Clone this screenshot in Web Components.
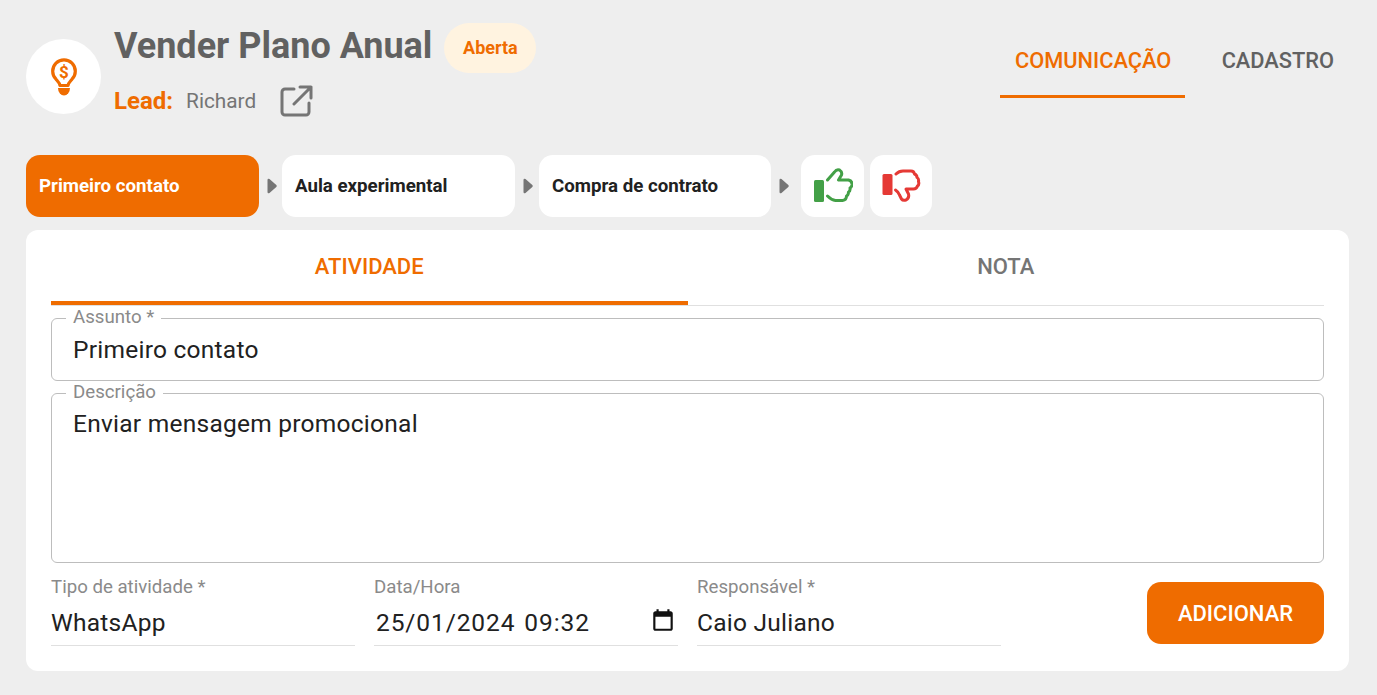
<!DOCTYPE html>
<html lang="pt"><head><meta charset="utf-8"><title>Vender Plano Anual</title>
<style>
html,body{margin:0;background:#eee;font-family:Roboto,sans-serif}
</style></head><body>
<crm-page></crm-page>
<template id="t-page">
<style>
:host{display:block;box-sizing:border-box;height:695px;padding:0 28px 0 26px;overflow:hidden;background:#eee}
header{display:flex;justify-content:space-between;height:155px}
.card{background:#fff;border-radius:12px;margin-top:13px;height:441px;box-sizing:border-box;padding:0 25px;display:flex;flex-direction:column}
.fields{display:flex;flex-direction:column;gap:12px;margin-top:12px}
.row{display:flex;gap:19px;margin-top:12px;align-items:flex-start}
.row crm-line-field{flex:0 0 304px}
.row crm-button{margin-left:auto;margin-top:7px}
</style>
<header><crm-heading></crm-heading><crm-tabs class="top"></crm-tabs></header>
<crm-steps></crm-steps>
<section class="card">
  <crm-inner-tabs></crm-inner-tabs>
  <div class="fields">
    <crm-outline-field label="Assunto *" value="Primeiro contato" h="63"></crm-outline-field>
    <crm-outline-field label="Descrição" value="Enviar mensagem promocional" h="170" area></crm-outline-field>
  </div>
  <div class="row">
    <crm-line-field label="Tipo de atividade *" value="WhatsApp"></crm-line-field>
    <crm-line-field label="Data/Hora" value="25/01/2024 09:32" date></crm-line-field>
    <crm-line-field label="Responsável *" value="Caio Juliano"></crm-line-field>
    <crm-button>ADICIONAR</crm-button>
  </div>
</section>
</template>

<template id="t-heading">
<style>
:host{display:flex;align-items:flex-start}
.logo{width:75px;height:75px;border-radius:50%;background:#fff;margin-top:39px;display:flex;align-items:center;justify-content:center;flex:none}
.txt{margin-left:13px;padding-top:23px}
.title{display:flex;align-items:center;height:50px}
h1{margin:0;font:700 36px/46px Roboto,sans-serif;color:#616161;height:50px}
.chip{margin-left:12px;width:92px;height:50px;border-radius:25px;background:#fff3e0;color:#ef6c00;font:700 18px/50px Roboto,sans-serif;text-align:center}
.lead{display:flex;align-items:center;height:32px;margin-top:12px}
b{font:700 24px/36px Roboto,sans-serif;color:#ef6c00}
span.n{font:400 20.800px/36px Roboto,sans-serif;color:#757575;margin-left:13px}
svg.ext{margin-left:23px}
</style>
<div class="logo">
<svg width="26" height="38" viewBox="0 0 26 38"><path d="M9 27.500c-.3-2.500-2.200-4.200-4-6.300A11.300 11.300 0 1 1 21 21.200c-1.800 2.100-3.700 3.800-4 6.300z" fill="none" stroke="#ef6c00" stroke-width="3.200" stroke-linejoin="round"/><path d="M7 30h12a6 7.500 0 0 1-12 0z" fill="#ef6c00"/><text x="13" y="19.500" text-anchor="middle" font-family="Roboto" font-weight="700" font-size="17" fill="#ef6c00">$</text></svg>
</div>
<div class="txt">
  <div class="title"><h1>Vender Plano Anual</h1><span class="chip">Aberta</span></div>
  <div class="lead"><b>Lead:</b><span class="n">Richard</span>
  <svg class="ext" width="34" height="34" viewBox="0 0 34 34" fill="none" stroke="#757575" stroke-width="3" stroke-linecap="round" stroke-linejoin="round"><path d="M15 5H6a3 3 0 0 0-3 3v20a3 3 0 0 0 3 3h21a3 3 0 0 0 3-3v-9"/><path d="M21 3h11v11M32 3 15 20"/></svg></div>
</div>
</template>

<template id="t-tabs">
<style>
:host{display:flex;padding-top:25px;height:73px}
div{height:73px;box-sizing:border-box;font:500 21.800px/72px Roboto,sans-serif;padding:0 15px;color:#616161}
.on{color:#ef6c00;border-bottom:3px solid #ef6c00;width:185px;padding:0 0 0 2px;text-align:center}
div+div{padding-left:37px}
</style>
<div class="on">COMUNICAÇÃO</div><div>CADASTRO</div>
</template>

<template id="t-steps">
<style>
:host{display:flex;align-items:center;height:62px}
.s{box-sizing:border-box;height:62px;width:233px;border-radius:14px;background:#fff;color:#212121;font:700 18.700px/62px Roboto,sans-serif;padding-left:13px;flex:none}
.s.on{background:#ef6c00;color:#fff}
svg.a{flex:none;margin:0 5px 0 8px}
.i{width:63px;height:62px;border-radius:14px;background:#fff;flex:none;display:flex;align-items:center;justify-content:center}
.i+.i{margin-left:6px;width:62px}
</style>
<div class="s on">Primeiro contato</div>
<svg class="a" width="10" height="16" viewBox="0 0 10 16"><path d="M.5 2q0-2 2-1l6.800 6q.9 1 0 2l-6.800 6q-2 1-2-1z" fill="#757575"/></svg>
<div class="s">Aula experimental</div>
<svg class="a" width="10" height="16" viewBox="0 0 10 16" style="margin-right:6px"><path d="M.5 2q0-2 2-1l6.800 6q.9 1 0 2l-6.800 6q-2 1-2-1z" fill="#757575"/></svg>
<div class="s" style="width:232px">Compra de contrato</div>
<svg class="a" width="10" height="16" viewBox="0 0 10 16" style="margin-right:12px"><path d="M.5 2q0-2 2-1l6.800 6q.9 1 0 2l-6.800 6q-2 1-2-1z" fill="#757575"/></svg>
<div class="i"><svg width="40" height="36" viewBox="812.500 168 40 36"><rect x="813.500" y="180" width="10" height="22" rx="1.500" fill="#43a047"/><path d="M827 180l7-8q2-3 5-2 3 2 2 5l-3 5h10q4 1 3.500 5-.5 2-2 3 .5 3-1.500 4 0 3-2 4 0 4-4 4.500h-7q-4-.5-8-4.500" fill="none" stroke="#43a047" stroke-width="3" stroke-linecap="round" stroke-linejoin="round"/></svg></div>
<div class="i"><svg width="40" height="36" viewBox="881 167 40 36"><rect x="882.500" y="173" width="10" height="21" rx="1.500" fill="#e53935"/><path d="M896 173q3-3 7-3h8q3 0 3.500 3 2.500 1 2.500 3.500 2 1 1.500 4 1 3-1 4.500-1 3-4 3h-7.500l2.500 5q1 4-2.500 6-3 1-4.500-1l-2-4q-1-3-4-5" fill="none" stroke="#e53935" stroke-width="3" stroke-linecap="round" stroke-linejoin="round"/></svg></div>
</template>

<template id="t-inner">
<style>
:host{display:flex;height:75px;border-bottom:1px solid #e0e0e0}
div{flex:1;text-align:center;box-sizing:border-box;height:75px;font:500 22px/73px Roboto,sans-serif;color:#757575}
.on{color:#ef6c00;border-bottom:4px solid #ef6c00}
</style>
<div class="on">ATIVIDADE</div><div>NOTA</div>
</template>

<template id="t-outline">
<style>
:host{display:block;position:relative;box-sizing:border-box;border:1px solid #bdbdbd;border-radius:6px}
.l{position:absolute;left:14px;top:-14px;background:linear-gradient(transparent 13px,#fff 13px);padding:0 7px;font:400 18.670px/24px Roboto,sans-serif;color:#8a8a8a;white-space:nowrap}
.v{font:400 24.500px/32px Roboto,sans-serif;color:#212121;padding:15px 21px 0;letter-spacing:.25px}
:host([area]) .v{padding-top:14px}
</style>
<span class="l"></span><div class="v"></div>
</template>

<template id="t-line">
<style>
:host{display:block;height:71px;box-sizing:border-box;border-bottom:1px solid #e0e0e0;position:relative}
.l{font:400 18.670px/24px Roboto,sans-serif;color:#8a8a8a;height:24px;white-space:nowrap}
.v{font:400 24.500px/32px Roboto,sans-serif;color:#212121;margin-top:8px;letter-spacing:.25px;white-space:nowrap}
:host([date]) .v{padding-left:2px;letter-spacing:.9px;word-spacing:2px}
svg{position:absolute;right:2px;top:32px}
</style>
<div class="l"></div><div class="v"></div>
</template>

<template id="t-btn">
<style>
:host{display:block;width:177px;height:62px;border-radius:14px;background:#ef6c00;color:#fff;font:500 22px/64px Roboto,sans-serif;text-align:center;flex:none}
</style><slot></slot>
</template>

<script>
function tpl(id){return document.getElementById(id).content.cloneNode(true)}
function simple(name,id){customElements.define(name,class extends HTMLElement{constructor(){super();this.attachShadow({mode:'open'}).appendChild(tpl(id))}})}
simple('crm-page','t-page');simple('crm-heading','t-heading');simple('crm-tabs','t-tabs');
simple('crm-steps','t-steps');simple('crm-inner-tabs','t-inner');simple('crm-button','t-btn');
customElements.define('crm-outline-field',class extends HTMLElement{
 constructor(){super();this.attachShadow({mode:'open'}).appendChild(tpl('t-outline'))}
 connectedCallback(){const s=this.shadowRoot;s.querySelector('.l').textContent=this.getAttribute('label');s.querySelector('.v').textContent=this.getAttribute('value');this.style.height=this.getAttribute('h')+'px'}
});
customElements.define('crm-line-field',class extends HTMLElement{
 constructor(){super();this.attachShadow({mode:'open'}).appendChild(tpl('t-line'))}
 connectedCallback(){const s=this.shadowRoot;s.querySelector('.l').textContent=this.getAttribute('label');s.querySelector('.v').textContent=this.getAttribute('value');
  if(this.hasAttribute('date')){const n=document.createElementNS('http://www.w3.org/2000/svg','svg');n.setAttribute('width','26');n.setAttribute('height','26');n.setAttribute('viewBox','0 0 24 24');n.innerHTML='<path d="M19 4h-1V2h-2v2H8V2H6v2H5c-1.100 0-2 .9-2 2v14c0 1.100.9 2 2 2h14c1.100 0 2-.9 2-2V6c0-1.100-.9-2-2-2zm0 16H5V9h14v11z" fill="#111"/>';s.appendChild(n)}}
});
</script>
</body></html>
